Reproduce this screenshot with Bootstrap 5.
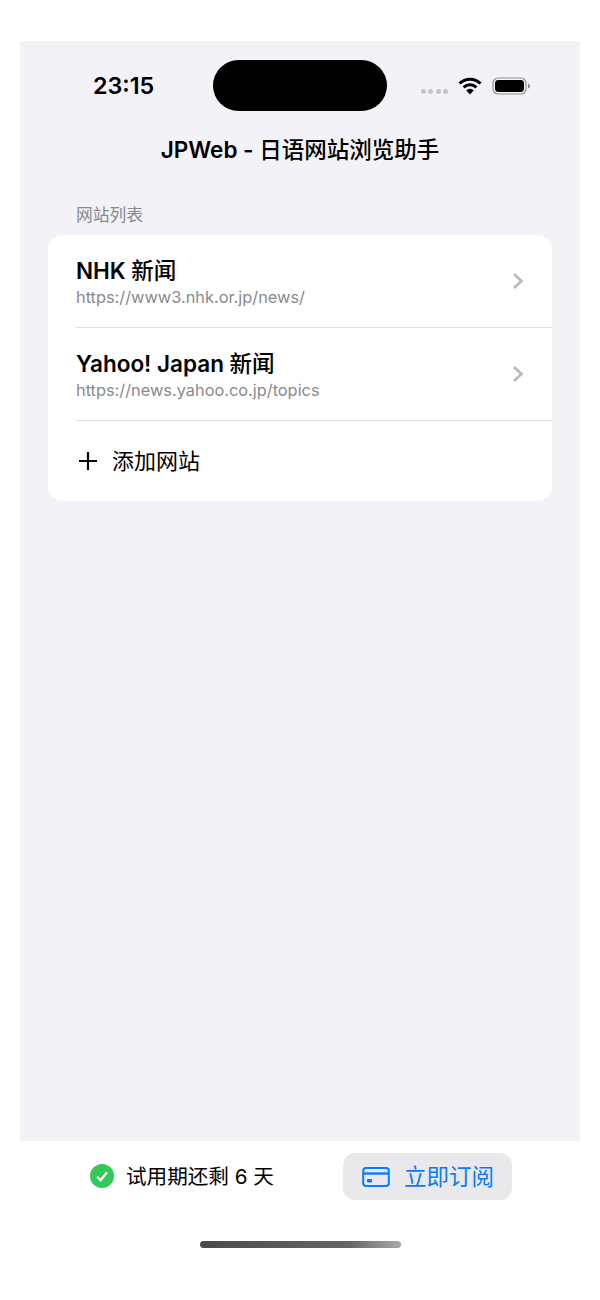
<!DOCTYPE html>
<html lang="zh">
<head>
    <meta charset="UTF-8">
    <meta name="viewport" content="width=device-width, initial-scale=1.0">
    <title>JPWeb</title>
    <link href="https://cdn.jsdelivr.net/npm/bootstrap@5.3.3/dist/css/bootstrap.min.css" rel="stylesheet">
    <style>
        body{
            background-color: #fff;
            font-family: Inter, "Noto Sans CJK SC", sans-serif;
            color: #000;
        }
        .phone-screen{
            margin: 41px 20px 0;
            height: 1100px;
            background-color: #f2f2f7;
            padding-top: 19px;
        }
        .status-row{
            height: 51px;
        }
        .status-side{
            flex: 0 0 192.5px;
        }
        .status-time{
            font-size: 23.3px;
            font-weight: 600;
            line-height: 1;
            padding-left: 73px;
            padding-top: 1px;
        }
        .island{
            flex: 0 0 174.5px;
            height: 51px;
            background-color: #000;
            border-radius: 26px;
        }
        .status-icons{
            padding-left: 34px;
            gap: 10px;
        }
        .signal-dots{
            gap: 2.3px;
            margin-top: 12px;
        }
        .signal-dot{
            width: 5px;
            height: 5px;
            border-radius: 50%;
            background-color: #c4c4c8;
        }
        .screen-title{
            font-size: 22.5px;
            font-weight: 600;
            line-height: 30px;
            margin: 24px 0 0;
            text-align: center;
        }
        .cjk-medium{
            font-weight: 500;
        }
        .section-label{
            font-size: 16.8px;
            line-height: 24px;
            color: #8a8a8e;
            padding-left: 56px;
            margin-top: 38px;
            margin-bottom: 8px;
        }
        .site-card{
            margin: 0 28px;
            background-color: #fff;
            border-radius: 14px;
            overflow: hidden;
        }
        .site-row{
            height: 93px;
            padding: 0 28px 0 28px;
        }
        .site-text{
            padding-top: 2px;
        }
        .site-chevron{
            margin-top: -2px;
        }
        .site-divider{
            height: 1px;
            background-color: #e0e0e2;
            margin-left: 28px;
            margin-top: -1px;
        }
        .site-name{
            font-size: 22.5px;
            font-weight: 600;
            line-height: 28px;
        }
        .site-url{
            font-size: 16.35px;
            line-height: 24px;
            color: #8a8a8e;
        }
        .add-row{
            height: 80px;
            padding-left: 28px;
            font-size: 22px;
            gap: 12px;
        }
        .foot-row{
            padding: 12px 88px 0 90px;
        }
        .trial-text{
            font-size: 20.6px;
            margin-left: 12px;
            padding-top: 2px;
        }
        .subscribe-btn{
            width: 169px;
            height: 47px;
            background-color: #e9e9eb;
            color: #0a7bfa;
            border: 0;
            border-radius: 12px;
            font-size: 22.5px;
            padding: 0 0 0 19px;
            gap: 14px;
        }
        .home-bar{
            width: 201px;
            height: 7px;
            margin: 41px auto 0;
            border-radius: 4px;
            background: linear-gradient(90deg, #4a4a4a 0%, #666 75%, #aaa 100%);
        }
    </style>
</head>
<body>
    <div class="phone-screen">
        <div class="status-row d-flex align-items-center">
            <div class="status-side status-time">23:15</div>
            <div class="island"></div>
            <div class="status-side status-icons d-flex align-items-center">
                <span class="signal-dots d-flex"><span class="signal-dot"></span><span class="signal-dot"></span><span class="signal-dot"></span><span class="signal-dot"></span></span>
                <svg width="24" height="18" viewBox="0 0 24 18">
                    <path d="M1.5 6.5 A15 15 0 0 1 22.5 6.5" fill="none" stroke="#000" stroke-width="3"/>
                    <path d="M5.6 10.4 A9.2 9.2 0 0 1 18.4 10.4" fill="none" stroke="#000" stroke-width="3"/>
                    <path d="M12 17.5 L8.2 13.3 A5.4 5.4 0 0 1 15.8 13.3 Z" fill="#000"/>
                </svg>
                <svg width="40" height="18" viewBox="0 0 40 18">
                    <rect x="1" y="1" width="33" height="16" rx="5" fill="none" stroke="#8e8e90" stroke-width="1.2"/>
                    <rect x="3" y="3" width="29" height="12" rx="3.4" fill="#000"/>
                    <path d="M36 6.5 C37.5 7 38 8 38 9 C38 10 37.5 11 36 11.5 Z" fill="#8e8e90"/>
                </svg>
            </div>
        </div>
        <h1 class="screen-title">JPWeb - <span class="cjk-medium">日语网站浏览助手</span></h1>
        <div class="section-label">网站列表</div>
        <div class="site-card">
            <div class="site-row d-flex align-items-center justify-content-between">
                <div class="site-text">
                    <div class="site-name">NHK <span class="cjk-medium">新闻</span></div>
                    <div class="site-url">https://www3.nhk.or.jp/news/</div>
                </div>
                <svg class="site-chevron" width="12" height="18" viewBox="0 0 12 18"><path d="M2 2 L9.5 9 L2 16" fill="none" stroke="#b9b9bb" stroke-width="2.6"/></svg>
            </div>
            <div class="site-divider"></div>
            <div class="site-row d-flex align-items-center justify-content-between">
                <div class="site-text">
                    <div class="site-name">Yahoo! Japan <span class="cjk-medium">新闻</span></div>
                    <div class="site-url">https://news.yahoo.co.jp/topics</div>
                </div>
                <svg class="site-chevron" width="12" height="18" viewBox="0 0 12 18"><path d="M2 2 L9.5 9 L2 16" fill="none" stroke="#b9b9bb" stroke-width="2.6"/></svg>
            </div>
            <div class="site-divider"></div>
            <div class="add-row d-flex align-items-center">
                <svg width="24" height="24" viewBox="0 0 24 24"><path d="M12 3 V21 M3 12 H21" stroke="#000" stroke-width="2.2" fill="none"/></svg>
                <span>添加网站</span>
            </div>
        </div>
    </div>
    <div class="foot-row d-flex align-items-center justify-content-between">
        <div class="d-flex align-items-center">
            <svg width="24" height="24" viewBox="0 0 24 24">
                <circle cx="12" cy="12" r="12" fill="#34c759"/>
                <path d="M7 12.5 L10.6 16.3 L17 8.2" fill="none" stroke="#fff" stroke-width="2.2"/>
            </svg>
            <span class="trial-text">试用期还剩 6 天</span>
        </div>
        <button type="button" class="subscribe-btn btn d-flex align-items-center">
            <svg width="28" height="22" viewBox="0 0 28 22">
                <rect x="1.2" y="2" width="25.6" height="18" rx="3" fill="none" stroke="#0a7bfa" stroke-width="2"/>
                <path d="M1.2 7.5 H26.8" stroke="#0a7bfa" stroke-width="2.4"/>
                <rect x="5" y="13" width="5" height="3.4" rx="0.8" fill="#0a7bfa"/>
            </svg>
            <span>立即订阅</span>
        </button>
    </div>
    <div class="home-bar"></div>
</body>
</html>
